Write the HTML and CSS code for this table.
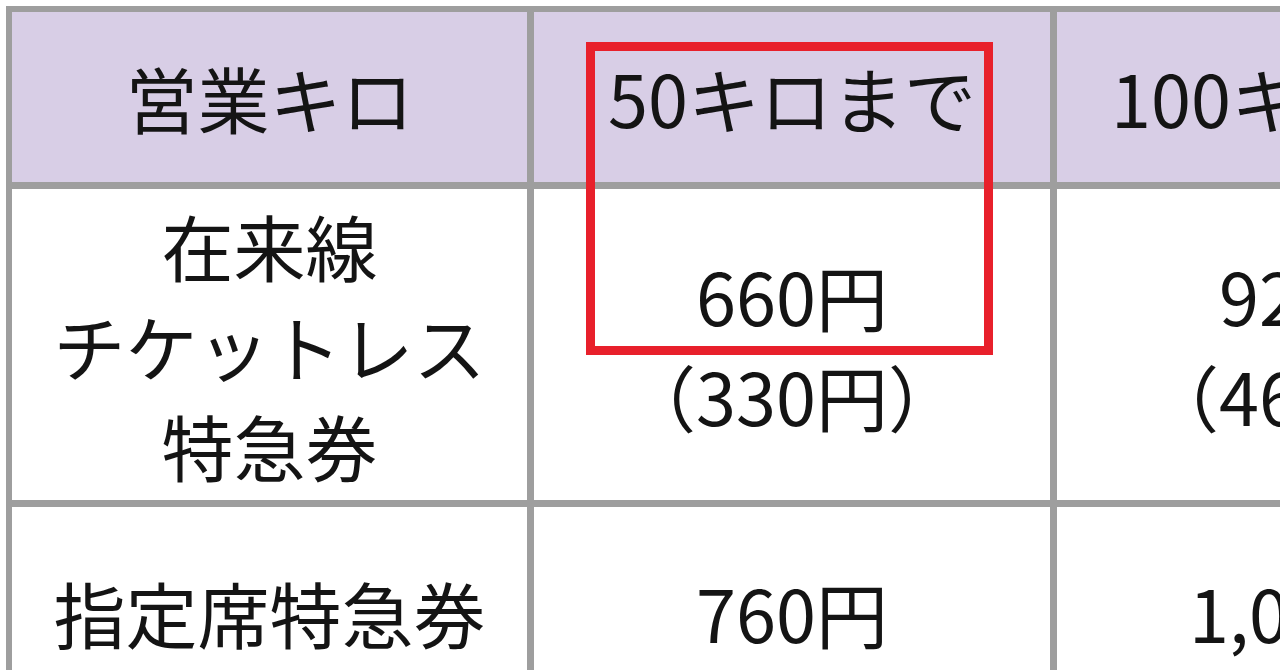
FILE: index.html
```html
<!DOCTYPE html>
<html lang="ja">
<head>
<meta charset="utf-8">
<title>特急券</title>
<link rel="stylesheet" href="styles.css">
</head>
<body>
<div class="fare-table">
  <div class="cell head">営業キロ</div>
  <div class="cell head">50キロまで</div>
  <div class="cell head">100キロまで</div>

  <div class="cell body"><span>在来線</span><span>チケットレス</span><span>特急券</span></div>
  <div class="cell body"><span>660円</span><span>（330円）</span></div>
  <div class="cell body"><span>920円</span><span>（460円）</span></div>

  <div class="cell body last"><span>指定席特急券</span></div>
  <div class="cell body last"><span>760円</span></div>
  <div class="cell body last"><span>1,020円</span></div>
</div>
<div class="highlight"></div>
</body>
</html>
```

FILE: styles.css
```css
html, body {
  margin: 0;
  padding: 0;
  overflow: hidden;
  width: 1280px;
  height: 670px;
  background: #ffffff;
}

body {
  position: relative;
  font-family: "Noto Sans CJK JP", "Noto Sans", sans-serif;
  color: #141414;
}

.fare-table {
  display: grid;
  grid-template-columns: 515px 516px 516px;
  grid-template-rows: 170px 311px auto;
  gap: 7px;
  width: max-content;
  margin: 6px 0 0 6px;
  border: 6px solid #9e9e9e;
  background: #9e9e9e;
}

.cell {
  display: flex;
  flex-direction: column;
  align-items: center;
  justify-content: center;
  font-size: 72px;
  line-height: 100px;
  white-space: nowrap;
  text-align: center;
}

.head {
  background: #d8cee6;
}

.body {
  background: #ffffff;
}

.last {
  justify-content: flex-start;
  padding-top: 55px;
  height: 200px;
  box-sizing: border-box;
}

.highlight {
  position: absolute;
  left: 586px;
  top: 42px;
  width: 407px;
  height: 313px;
  box-sizing: border-box;
  border: 9px solid #e8202b;
}
```
